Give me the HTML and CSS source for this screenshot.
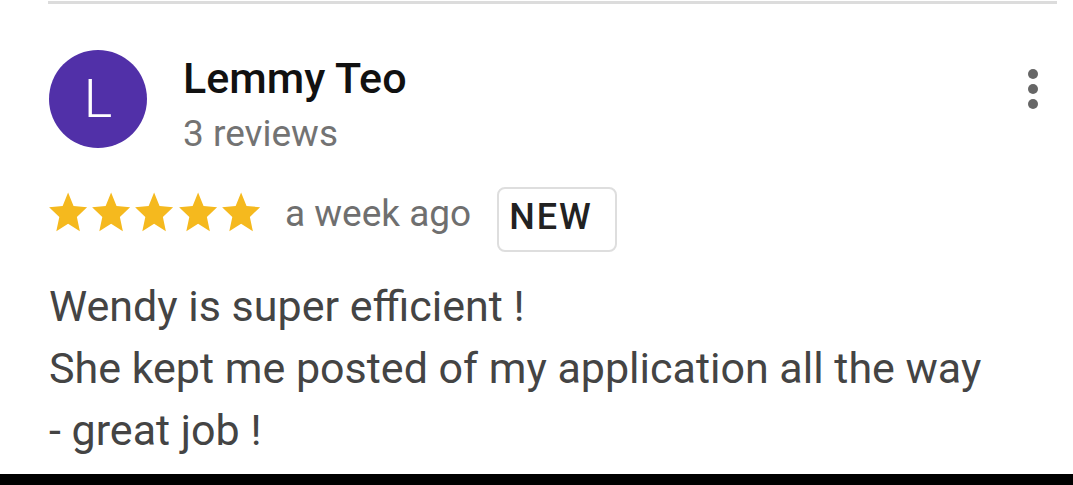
FILE: index.html
```html
<!DOCTYPE html>
<html>
<head>
<meta charset="utf-8">
<link rel="stylesheet" href="styles.css">
</head>
<body>
<div class="screen">
  <div class="divider"></div>
  <div class="review">
    <div class="header">
      <div class="avatar">L</div>
      <div class="who">
        <div class="name">Lemmy Teo</div>
        <div class="count">3 reviews</div>
      </div>
      <div class="kebab"><span></span><span></span><span></span></div>
    </div>
    <div class="rating">
      <div class="stars">
        <svg viewBox="0 0 24 24" preserveAspectRatio="none"><path d="M12 1.8l3.1 7.1 7.7.7-5.8 5.1 1.7 7.6L12 18.3 5.3 22.3 7 14.7 1.2 9.6l7.7-.7z"/></svg>
        <svg viewBox="0 0 24 24" preserveAspectRatio="none"><path d="M12 1.8l3.1 7.1 7.7.7-5.8 5.1 1.7 7.6L12 18.3 5.3 22.3 7 14.7 1.2 9.6l7.7-.7z"/></svg>
        <svg viewBox="0 0 24 24" preserveAspectRatio="none"><path d="M12 1.8l3.1 7.1 7.7.7-5.8 5.1 1.7 7.6L12 18.3 5.3 22.3 7 14.7 1.2 9.6l7.7-.7z"/></svg>
        <svg viewBox="0 0 24 24" preserveAspectRatio="none"><path d="M12 1.8l3.1 7.1 7.7.7-5.8 5.1 1.7 7.6L12 18.3 5.3 22.3 7 14.7 1.2 9.6l7.7-.7z"/></svg>
        <svg viewBox="0 0 24 24" preserveAspectRatio="none"><path d="M12 1.8l3.1 7.1 7.7.7-5.8 5.1 1.7 7.6L12 18.3 5.3 22.3 7 14.7 1.2 9.6l7.7-.7z"/></svg>
      </div>
      <span class="ago">a week ago</span>
      <span class="badge">NEW</span>
    </div>
    <div class="text">Wendy is super efficient !<br>She kept me posted of my application all the way<br>- great job !</div>
  </div>
</div>
<div class="bar"></div>
</body>
</html>
```
FILE: styles.css
```css
html, body {
  margin: 0;
  padding: 0;
  background: #fff;
}
body {
  font-family: Roboto, "Liberation Sans", sans-serif;
  width: 1073px;
  height: 485px;
  overflow: hidden;
  display: flex;
  flex-direction: column;
}
.screen {
  height: 474px;
  padding: 1px 16px 0 48px;
  box-sizing: border-box;
}
.divider {
  height: 3px;
  background: #dcdcdc;
}
.review {
  padding-left: 1px;
}
.header {
  display: flex;
  align-items: flex-start;
  margin-top: 46px;
}
.avatar {
  width: 98px;
  height: 98px;
  border-radius: 50%;
  background: #5130a8;
  color: #fff;
  font-size: 54px;
  font-weight: 300;
  line-height: 98px;
  text-align: center;
  flex-shrink: 0;
}
.who {
  margin-left: 36px;
  margin-top: 4px;
}
.name {
  font-size: 43px;
  font-weight: 500;
  color: #111;
  line-height: 48px;
}
.count {
  margin-top: 9px;
  font-size: 37px;
  color: #737373;
  line-height: 46px;
}
.kebab {
  margin-left: auto;
  margin-top: 19px;
  margin-right: 19px;
  display: flex;
  flex-direction: column;
  gap: 5px;
}
.kebab span {
  width: 10px;
  height: 10px;
  border-radius: 50%;
  background: #666;
}
.rating {
  display: flex;
  align-items: flex-start;
  margin-top: 30px;
}
.stars {
  display: flex;
  gap: 1px;
  margin-left: -2px;
  margin-top: 2px;
}
.stars svg {
  width: 42.2px;
  height: 45.6px;
  fill: #f5b91e;
}
.ago {
  font-size: 37px;
  line-height: 42px;
  color: #6f6f6f;
  margin-left: 23px;
  margin-top: 6px;
}
.badge {
  margin-left: 26px;
  border: 2px solid #dedede;
  border-radius: 8px;
  padding: 0 22px 4px 10px;
  height: 57px;
  line-height: 57px;
  font-size: 36px;
  font-weight: 500;
  color: #222;
  letter-spacing: 2px;
}
.text {
  margin-top: 23px;
  font-size: 43px;
  line-height: 62px;
  color: #444;
}
.bar {
  height: 11px;
  background: #000;
}
```
